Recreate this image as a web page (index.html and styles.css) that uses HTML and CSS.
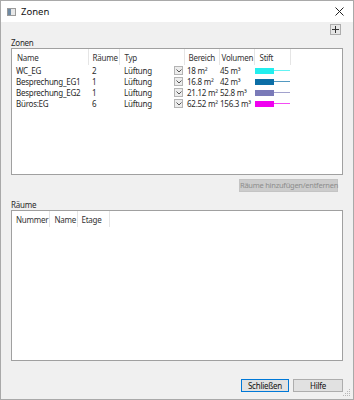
FILE: index.html
```html
<!DOCTYPE html>
<html lang="de">
<head>
  <meta charset="UTF-8" />
  <title>Zonen</title>
  <link rel="stylesheet" href="styles.css">
</head>
<body>
<div class="window">
  <div class="titlebar">
    <svg class="app-icon" width="9" height="8" viewBox="0 0 9 8">
      <rect x="0.5" y="0.5" width="8" height="7" fill="#e8e8e8" stroke="#9a9a9a"/>
      <rect x="1" y="1" width="3" height="6" fill="#6f8aa3"/>
    </svg>
    <span class="title">Zonen</span>
    <svg class="close" width="9" height="9" viewBox="0 0 9 9">
      <path d="M0.5 0.5 L8.5 8.5 M8.5 0.5 L0.5 8.5" stroke="#222" stroke-width="1"/>
    </svg>
  </div>

  <div class="client">
    <div class="toolbar">
      <button class="add-btn" type="button">
        <svg width="9" height="9" viewBox="0 0 9 9"><path d="M4.5 1 V8 M1 4.5 H8" stroke="#333" stroke-width="1"/></svg>
      </button>
    </div>

    <div class="group-label">Zonen</div>
    <div class="listbox zones">
      <table class="list">
        <colgroup>
          <col style="width:76px"><col style="width:31px"><col style="width:65px">
          <col style="width:35px"><col style="width:35px"><col style="width:36px"><col>
        </colgroup>
        <thead>
          <tr>
            <th class="p5">Name</th><th>Räume</th><th class="p5">Typ</th>
            <th>Bereich</th><th class="p2">Volumen</th><th class="p5">Stift</th><th class="filler"></th>
          </tr>
        </thead>
        <tbody>
          <tr>
            <td>WC_EG</td><td>2</td>
            <td class="typ"><span>Lüftung</span><span class="combo"><svg width="6" height="4" viewBox="0 0 6 4"><path d="M0.5 0.5 L3 3 L5.5 0.5" fill="none" stroke="#555"/></svg></span></td>
            <td class="p3">18 m²</td><td class="p1">45 m³</td>
            <td class="p1"><span class="pen"><span class="swatch" style="background:#22eeee"></span><span class="line" style="background:#22eeee"></span></span></td><td></td>
          </tr>
          <tr>
            <td>Besprechung_EG1</td><td>1</td>
            <td class="typ"><span>Lüftung</span><span class="combo"><svg width="6" height="4" viewBox="0 0 6 4"><path d="M0.5 0.5 L3 3 L5.5 0.5" fill="none" stroke="#555"/></svg></span></td>
            <td class="p3">16.8 m²</td><td class="p1">42 m³</td>
            <td class="p1"><span class="pen"><span class="swatch" style="background:#0c6ea6"></span><span class="line" style="background:#0c6ea6"></span></span></td><td></td>
          </tr>
          <tr>
            <td>Besprechung_EG2</td><td>1</td>
            <td class="typ"><span>Lüftung</span><span class="combo"><svg width="6" height="4" viewBox="0 0 6 4"><path d="M0.5 0.5 L3 3 L5.5 0.5" fill="none" stroke="#555"/></svg></span></td>
            <td class="p3">21.12 m²</td><td class="p1">52.8 m³</td>
            <td class="p1"><span class="pen"><span class="swatch" style="background:#7a7ab8"></span><span class="line" style="background:#7a7ab8"></span></span></td><td></td>
          </tr>
          <tr>
            <td>Büros:EG</td><td>6</td>
            <td class="typ"><span>Lüftung</span><span class="combo"><svg width="6" height="4" viewBox="0 0 6 4"><path d="M0.5 0.5 L3 3 L5.5 0.5" fill="none" stroke="#555"/></svg></span></td>
            <td class="p3">62.52 m²</td><td class="p1">156.3 m³</td>
            <td class="p1"><span class="pen"><span class="swatch" style="background:#f000f0"></span><span class="line" style="background:#f000f0"></span></span></td><td></td>
          </tr>
        </tbody>
      </table>
    </div>

    <div class="button-row">
      <button class="btn disabled" type="button" disabled>Räume hinzufügen/entfernen</button>
    </div>

    <div class="group-label rooms-label">Räume</div>
    <div class="listbox rooms">
      <table class="list">
        <colgroup>
          <col style="width:37px"><col style="width:28px"><col style="width:32px"><col>
        </colgroup>
        <thead>
          <tr><th>Nummer</th><th class="p5">Name</th><th>Etage</th><th class="filler"></th></tr>
        </thead>
      </table>
    </div>

    <div class="footer">
      <button class="btn default" type="button">Schließen</button>
      <button class="btn help" type="button">Hilfe</button>
    </div>
  </div>

  <svg class="grip" width="8" height="8" viewBox="0 0 8 8">
    <g fill="#b8b8b8">
      <rect x="6" y="0" width="1" height="1"/>
      <rect x="4" y="2" width="1" height="1"/><rect x="6" y="2" width="1" height="1"/>
      <rect x="2" y="4" width="1" height="1"/><rect x="4" y="4" width="1" height="1"/><rect x="6" y="4" width="1" height="1"/>
      <rect x="0" y="6" width="1" height="1"/><rect x="2" y="6" width="1" height="1"/><rect x="4" y="6" width="1" height="1"/><rect x="6" y="6" width="1" height="1"/>
    </g>
  </svg>
</div>
</body>
</html>
```

FILE: styles.css
```css
body { margin: 0; font-family: "Noto Sans", Arial, sans-serif; font-size: 8px; letter-spacing: -0.25px; color: #2a2a2a; }
button { font-family: inherit; font-size: inherit; letter-spacing: inherit; margin: 0; }

.window { position: relative; width: 354px; height: 400px; box-sizing: border-box; border: 1px solid #a9a9a9; background: #f0f0f0; display: flex; flex-direction: column; }

.titlebar { height: 21px; background: #fff; display: flex; align-items: center; padding: 0 9px 0 6px; }
.app-icon { display: block; }
.title { flex: 1; margin-left: 5px; font-size: 9.5px; letter-spacing: 0; color: #111; }
.close { display: block; }

.client { flex: 1; padding: 2px 10px 0 10px; display: flex; flex-direction: column; }

.toolbar { display: flex; justify-content: flex-end; height: 11px; margin-right: 2px; }
.add-btn { width: 11px; height: 11px; padding: 0; border: 1px solid #adadad; background: #e6e6e6; display: flex; align-items: center; justify-content: center; }
.add-btn svg { display: block; }

.group-label { height: 11px; line-height: 11px; margin-top: 2px; }

.listbox { background: #fff; border: 1px solid #a0a0a0; box-sizing: border-box; }
.zones { height: 127px; }
.rooms { height: 151px; }

.list { border-collapse: collapse; table-layout: fixed; width: 100%; }
.list th { height: 16px; padding: 0 0 0 4px; font-weight: normal; text-align: left; border-right: 1px solid #e5e5e5; color: #333; white-space: nowrap; overflow: hidden; }
.list th.filler { border-right: none; }
.list td { height: 11px; padding: 0 0 0 4px; white-space: nowrap; line-height: 11px; }
.list .p1 { padding-left: 1px; }
.list .p2 { padding-left: 2px; }
.list .p3 { padding-left: 3px; }
.list .p5 { padding-left: 5px; }

.list td.typ { padding-left: 5px; }
.typ { position: relative; }
.combo { position: absolute; right: 1px; top: 1px; width: 7px; height: 7px; border: 1px solid #b4b4b4; background: #ececec; display: flex; align-items: center; justify-content: center; }
.combo svg { display: block; }

.pen { display: flex; align-items: center; height: 11px; }
.swatch { display: block; width: 19px; height: 6px; }
.line { display: block; width: 16px; height: 1px; opacity: 0.7; }

.button-row { display: flex; justify-content: flex-end; margin-top: 4px; margin-right: 5px; }
.btn { height: 13px; padding: 0; border: 1px solid #adadad; background: #e1e1e1; color: #111; line-height: 11px; white-space: nowrap; }
.btn.disabled { width: 99px; background: #cccccc; border-color: #c4c4c4; color: #8c8c8c; font-size: 7.5px; }

.rooms-label { margin-top: 8px; height: 10px; line-height: 10px; }

.footer { display: flex; justify-content: flex-end; gap: 4px; margin-top: 18px; }
.btn.default { width: 48px; border-color: #0078d7; }
.btn.help { width: 50px; }

.grip { position: absolute; right: 2px; bottom: 2px; }
```
